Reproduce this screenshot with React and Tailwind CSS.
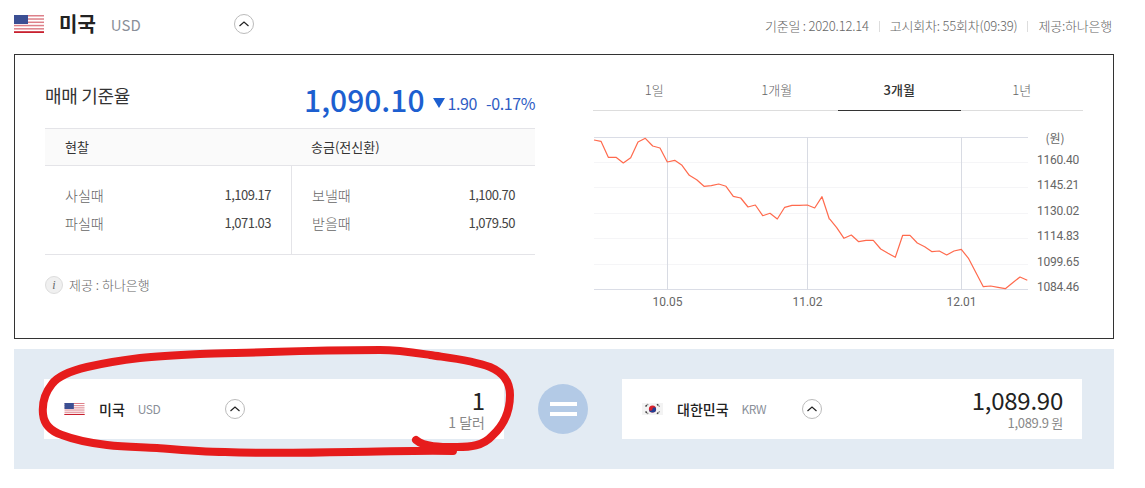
const FONT = "font-['Noto_Sans_CJK_KR','Noto_Sans',sans-serif]";

const raw1 = [[27,45],[48,49],[70,97],[93,97],[115,114],[137,98],[159,51],[181,40],[203,63],[225,69],[247,111],[269,106],[291,121],[313,151],[335,164],[357,184],[379,182],[401,177],[423,184],[445,214],[467,219],[489,246],[511,240],[533,272],[555,265],[577,282],[599,247],[621,241],[643,241],[667,240],[689,249],[711,215],[733,282]];
const raw2 = [[0,283],[20,308],[42,340],[64,330],[86,350],[108,346],[130,346],[152,372],[174,385],[196,397],[218,331],[240,331],[262,354],[284,365],[306,380],[328,378],[350,390],[372,378],[394,373],[416,401],[460,485],[482,483],[504,487],[526,491],[548,473],[570,456],[592,466]];
const linePts = [
  ...raw1.map(([x, y]) => `${(585 + x / 3 - 593).toFixed(1)},${(125 + y / 3 - 130).toFixed(1)}`),
  ...raw2.map(([x, y]) => `${(830 + x / 3 - 593).toFixed(1)},${(125 + y / 3 - 130).toFixed(1)}`),
].join(" ");

const scribble = "M416 440 C424 447 440 447 457 447 C470 447 483 446 492 436 C503 426 510 412 510 395 C510 380 502 372 490 367 C472 360 450 358 430 355 C410 352 398 350 380 350 C340 350 300 351 270 352 C240 353 220 353 200 354 C180 355 160 356 140 358 C115 361 100 364 87 367 C70 371 58 376 52 384 C44 394 42 404 43 414 C44 424 50 431 62 435 C75 440 90 443 107 445 C125 447 140 447 157 448 C180 450 200 452 225 452 C250 453 300 453 350 452 C385 452 415 450 453 451";

function USFlag({ w, h }) {
  return (
    <svg width={w} height={h} viewBox="0 0 30 18" className="shrink-0 block">
      <rect width="30" height="18" fill="#fff" />
      {[0, 1, 2, 3, 4, 5].map((i) => (
        <rect key={i} x="0" y={i * 3.27} width="30" height="1.5" fill={i === 5 ? "#c8202f" : "#dd8089"} />
      ))}
      <rect x="0" y="16.6" width="30" height="1.4" fill="#c8202f" />
      <rect width="14" height="9" fill="#3b4f93" />
    </svg>
  );
}

function KRFlag() {
  return (
    <svg width="21" height="12" viewBox="0 0 21 12" className="shrink-0 block">
      <rect width="21" height="12" fill="#f3f3f3" />
      <circle cx="10.5" cy="6" r="3.6" fill="#d81f2a" />
      <path d="M6.9 6 a3.6 3.6 0 0 0 7.2 0 a1.8 1.8 0 0 0 -3.6 0 a1.8 1.8 0 0 1 -3.6 0z" fill="#1f3f94" />
      <g stroke="#444" strokeWidth="1.5" strokeDasharray="2 0.8">
        <path d="M3.5 3.5 L6 1.2" />
        <path d="M15 1.2 L17.5 3.5" />
        <path d="M3.5 8.5 L6 10.8" />
        <path d="M15 10.8 L17.5 8.5" />
      </g>
    </svg>
  );
}

function Chevron() {
  return (
    <span className="w-5 h-5 rounded-full border border-[#bbbbbb] bg-white flex items-center justify-center shrink-0">
      <svg width="12" height="8" viewBox="0 0 12 8" fill="none">
        <path d="M1.5 6 L6 2 L10.5 6" stroke="#222" strokeWidth="1.2" />
      </svg>
    </span>
  );
}

function Row({ a, b }) {
  return (
    <div className="flex justify-between items-center h-7">
      <span className="text-[14px] font-light text-[#666666]">{a}</span>
      <span className="text-[13px] tracking-[-0.5px] text-[#444444]">{b}</span>
    </div>
  );
}

function Sep() {
  return <span className="w-px h-[11px] bg-[#dddddd] mx-[10px]" />;
}

function Chart() {
  const grid = [32, 57, 83, 108, 134];
  const yLabels = [["1160.40", 33.6], ["1145.21", 59.1], ["1130.02", 84.6], ["1114.83", 110.1], ["1099.65", 135.5], ["1084.46", 161]];
  const xLines = [[74, "10.05"], [214, "11.02"], [368, "12.01"]];
  return (
    <svg width="490" height="190" viewBox="0 0 490 190" className="block mt-[19px]" style={{ fontFamily: "Roboto, sans-serif" }}>
      {grid.map((y) => (
        <line key={y} x1="1" x2="435" y1={y + 0.5} y2={y + 0.5} stroke="#f5f5f7" />
      ))}
      <line x1="1" x2="435" y1="7.5" y2="7.5" stroke="#dadde6" />
      <line x1="1" x2="435" y1="159.5" y2="159.5" stroke="#dadde6" />
      {xLines.map(([x, t]) => (
        <g key={t}>
          <line x1={x + 0.5} x2={x + 0.5} y1="7" y2="160" stroke="#d8dbe3" />
          <text x={x + 0.5} y="176" textAnchor="middle" fontSize="12" fill="#666">{t}</text>
        </g>
      ))}
      <polyline points={linePts} fill="none" stroke="#ff6a4d" strokeWidth="1.2" strokeLinejoin="round" />
      <text x="462" y="13" textAnchor="middle" fontSize="12" fill="#666" style={{ fontFamily: "'Noto Sans CJK KR', sans-serif" }}>(원)</text>
      {yLabels.map(([t, y]) => (
        <text key={t} x="444" y={y} fontSize="12" letterSpacing="-0.25" fill="#666">{t}</text>
      ))}
    </svg>
  );
}

function Card({ flag, name, code, codeClass, big, small, bigClass, smallClass }) {
  return (
    <div className="w-[460px] h-[60px] bg-white flex items-center pl-5 pr-[19px]">
      <div className="w-[35px] shrink-0">{flag}</div>
      <span className="text-[14px] font-medium text-[#222222]">{name}</span>
      <span className={`text-[12px] text-[#8a8f99] tracking-[-0.5px] ${codeClass}`}>{code}</span>
      <Chevron />
      <div className="ml-auto text-right">
        <div className={`text-[24px] leading-[27px] text-[#222222] ${bigClass}`}>{big}</div>
        <div className={`leading-[19px] text-[#888888] ${smallClass}`}>{small}</div>
      </div>
    </div>
  );
}

export default function App() {
  return (
    <div className={`relative w-[1145px] h-[488px] bg-white overflow-hidden pl-[14px] ${FONT}`}>
      {/* header */}
      <div className="w-[1098px] h-[54px] flex items-center pb-[6px]">
        <USFlag w={30} h={18} />
        <span className="ml-[15px] text-[20px] font-bold text-[#222222]">미국</span>
        <span className="ml-[15px] text-[15px] text-[#8a8f99] mt-[2px]">USD</span>
        <span className="ml-[93px]"><Chevron /></span>
        <div className="ml-auto flex items-center text-[13px] font-light tracking-[-0.2px] text-[#666666] mt-[4px]">
          <span>기준일 : 2020.12.14</span>
          <Sep />
          <span>고시회차: 55회차(09:39)</span>
          <Sep />
          <span>제공:하나은행</span>
        </div>
      </div>

      {/* main box */}
      <div className="w-[1100px] h-[285px] border border-[#333333] flex">
        <div className="ml-[30px] w-[490px]">
          <div className="h-[73px] flex items-center relative pt-[10px]">
            <span className="text-[18px] tracking-[-0.3px] text-[#333333] mt-[-2px]">매매 기준율</span>
            <div className="ml-auto flex items-end mt-[5px]">
              <span className="text-[30px] font-medium text-[#1d5fd0] leading-none">1,090.10</span>
              <svg width="12" height="10" viewBox="0 0 12 10" className="ml-[8px] mb-[6px]">
                <path d="M0 0 H12 L6 10 Z" fill="#1d5fd0" />
              </svg>
              <span className="ml-[3px] text-[16px] leading-[22px] text-[#2f5cc4] tracking-[-0.4px]">1.90</span>
              <span className="ml-[9px] text-[16px] leading-[22px] text-[#2f5cc4] tracking-[-0.4px]">-0.17%</span>
            </div>
          </div>
          <div className="h-[38px] border-y border-[#e4e4e8] bg-[#fafafa] flex items-center text-[13px] text-[#333333]">
            <span className="w-[246px] pl-5">현찰</span>
            <span className="pl-5">송금(전신환)</span>
          </div>
          <div className="h-[89px] border-b border-[#e4e4e8] flex">
            <div className="w-[247px] border-r border-[#e4e4e8] pl-5 pr-5 pt-[15px]">
              <Row a="사실때" b="1,109.17" />
              <Row a="파실때" b="1,071.03" />
            </div>
            <div className="flex-1 pl-5 pr-5 pt-[15px]">
              <Row a="보낼때" b="1,100.70" />
              <Row a="받을때" b="1,079.50" />
            </div>
          </div>
          <div className="flex items-center mt-[20px]">
            <span className="w-[18px] h-[18px] rounded-full bg-[#f0f0f0] border border-[#dddddd] flex items-center justify-center font-['Liberation_Serif',serif] italic text-[12px] text-[#666666]">i</span>
            <span className="ml-[6px] text-[13px] font-light text-[#666666]">제공 : 하나은행</span>
          </div>
        </div>

        <div className="ml-[58px] w-[490px] pt-[25px]">
          <div className="flex h-[31px] border-b border-[#dddddd] text-[13px] font-light text-[#666666]">
            <span className="flex-1 text-center">1일</span>
            <span className="flex-1 text-center">1개월</span>
            <span className="flex-1 text-center h-[31px] border-b border-[#333333] font-medium text-[#333333]">3개월</span>
            <span className="flex-1 text-center">1년</span>
          </div>
          <Chart />
        </div>
      </div>

      {/* converter */}
      <div className="w-[1100px] h-[120px] mt-[10px] bg-[#e3ebf3] flex items-center pl-[30px]">
        <Card flag={<USFlag w={21} h={12} />} name="미국" code="USD" codeClass="ml-[13px] mr-[65px]" big="1" small="1 달러" smallClass="text-[14px]" />
        <div className="ml-[34px] w-[50px] h-[50px] rounded-full bg-[#b3cae6] flex flex-col items-center justify-center gap-[6px]">
          <span className="w-[27px] h-1 bg-white" />
          <span className="w-[27px] h-1 bg-white" />
        </div>
        <div className="ml-[34px]">
          <Card flag={<KRFlag />} name="대한민국" code="KRW" codeClass="ml-[13px] mr-[36px]" big="1,089.90" bigClass="tracking-[-0.25px]" small="1,089.9 원" smallClass="text-[13px] tracking-[-0.3px]" />
        </div>
      </div>

      {/* hand-drawn annotation */}
      <svg width="1145" height="488" viewBox="0 0 1145 488" className="absolute left-0 top-0 pointer-events-none">
        <path d={scribble} fill="none" stroke="#e61c1c" strokeWidth="8" strokeLinecap="round" strokeLinejoin="round" />
      </svg>
    </div>
  );
}
